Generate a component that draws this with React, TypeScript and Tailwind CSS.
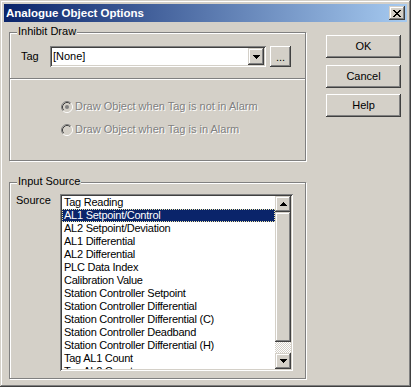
import React from "react";

const items = [
  "Tag Reading",
  "AL1 Setpoint/Control",
  "AL2 Setpoint/Deviation",
  "AL1 Differential",
  "AL2 Differential",
  "PLC Data Index",
  "Calibration Value",
  "Station Controller Setpoint",
  "Station Controller Differential",
  "Station Controller Differential (C)",
  "Station Controller Deadband",
  "Station Controller Differential (H)",
  "Tag AL1 Count",
  "Tag AL2 Count",
];

const winRaised =
  "shadow-[inset_-1px_-1px_#404040,inset_1px_1px_#d4d0c8,inset_-2px_-2px_#808080,inset_2px_2px_#ffffff]";
const btnRaised =
  "shadow-[inset_-1px_-1px_#404040,inset_1px_1px_#ffffff,inset_-2px_-2px_#808080,inset_2px_2px_#d4d0c8]";
const sunken =
  "shadow-[inset_1px_1px_#808080,inset_-1px_-1px_#ffffff,inset_2px_2px_#404040,inset_-2px_-2px_#d4d0c8]";

function Arrow({ up }: { up?: boolean }) {
  const rows = up
    ? [
        [3, 1],
        [2, 3],
        [1, 5],
        [0, 7],
      ]
    : [
        [0, 7],
        [1, 5],
        [2, 3],
        [3, 1],
      ];
  return (
    <svg width="7" height="4" viewBox="0 0 7 4" shapeRendering="crispEdges">
      {rows.map(([x, w], i) => (
        <rect key={i} x={x} y={i} width={w} height={1} fill="#000" />
      ))}
    </svg>
  );
}

function CloseGlyph() {
  const rows: [number, number][][] = [
    [
      [0, 2],
      [6, 2],
    ],
    [
      [1, 2],
      [5, 2],
    ],
    [[2, 4]],
    [[3, 2]],
    [[2, 4]],
    [
      [1, 2],
      [5, 2],
    ],
    [
      [0, 2],
      [6, 2],
    ],
  ];
  return (
    <svg width="8" height="7" viewBox="0 0 8 7" shapeRendering="crispEdges">
      {rows.map((r, y) =>
        r.map(([x, w], j) => <rect key={y + "-" + j} x={x} y={y} width={w} height={1} fill="#000" />)
      )}
    </svg>
  );
}

function Radio({ checked }: { checked?: boolean }) {
  return (
    <svg width="12" height="12" viewBox="0 0 12 12">
      <circle cx="6" cy="6" r="4.5" fill="#d4d0c8" />
      <path d="M2.11 9.89 A5.5 5.5 0 0 1 9.89 2.11" fill="none" stroke="#808080" strokeWidth="1" />
      <path d="M9.89 2.11 A5.5 5.5 0 0 1 2.11 9.89" fill="none" stroke="#ffffff" strokeWidth="1" />
      <path d="M2.82 9.18 A4.5 4.5 0 0 1 9.18 2.82" fill="none" stroke="#404040" strokeWidth="1" />
      <path d="M9.18 2.82 A4.5 4.5 0 0 1 2.82 9.18" fill="none" stroke="#d4d0c8" strokeWidth="1" />
      {checked && <circle cx="6" cy="6" r="2" fill="#808080" />}
    </svg>
  );
}

function GroupBox({
  label,
  className,
  children,
}: {
  label: string;
  className: string;
  children?: React.ReactNode;
}) {
  return (
    <div
      className={
        "relative border border-[#808080] shadow-[1px_1px_0_#ffffff,inset_1px_1px_0_#ffffff] " + className
      }
    >
      <span className="absolute left-[7px] top-[-8px] bg-[#d4d0c8] px-[1px] leading-[13px]">{label}</span>
      {children}
    </div>
  );
}

function PushButton({ label, className }: { label: string; className?: string }) {
  return (
    <div
      className={
        "w-[75px] h-[23px] flex items-center justify-center bg-[#d4d0c8] " + btnRaised + " " + (className || "")
      }
    >
      {label}
    </div>
  );
}

export default function App() {
  return (
    <div
      className={
        "w-[411px] h-[387px] bg-[#d4d0c8] p-[4px] flex flex-col font-['Liberation_Sans',Arial,sans-serif] text-[11px] leading-[13px] text-black " +
        winRaised
      }
    >
      <div className="h-[18px] flex items-center justify-between bg-[linear-gradient(to_right,#0a246a,#a6caf0)] pl-[2px] pr-[2px]">
        <span className="text-white font-bold text-[11.5px]">Analogue Object Options</span>
        <div className={"w-[16px] h-[14px] bg-[#d4d0c8] flex items-center justify-center " + winRaised}>
          <CloseGlyph />
        </div>
      </div>

      <div className="flex pl-[5px] pt-[10px]">
        <div className="w-[297px] flex flex-col">
          <GroupBox label="Inhibit Draw" className="h-[129px] flex flex-col">
            <div className="h-[46px] border-b border-[#808080] shadow-[0_1px_0_#ffffff] flex items-start pt-[13px] pl-[11px]">
              <span className="w-[29px] h-[21px] flex items-center">Tag</span>
              <div className={"w-[216px] h-[21px] bg-white p-[2px] flex " + sunken}>
                <span className="flex-1 pl-[1px] flex items-center">[None]</span>
                <div className={"w-[16px] h-[17px] bg-[#d4d0c8] flex items-center justify-center " + winRaised}>
                  <Arrow />
                </div>
              </div>
              <div className={"ml-[4px] w-[21px] h-[21px] bg-[#d4d0c8] flex items-center justify-center " + btnRaised}>
                <span className="leading-[11px] pt-[2px]">...</span>
              </div>
            </div>
            <div className="flex flex-col pt-[21px] pl-[51px] text-[#808080] [text-shadow:1px_1px_0_#ffffff]">
              <div className="flex items-center h-[13px]">
                <Radio checked />
                <span className="ml-[2px]">Draw Object when Tag is not in Alarm</span>
              </div>
              <div className="flex items-center h-[13px] mt-[10px]">
                <Radio />
                <span className="ml-[2px]">Draw Object when Tag is in Alarm</span>
              </div>
            </div>
          </GroupBox>

          <GroupBox label="Input Source" className="h-[197px] mt-[21px]">
            <div className="flex pt-[11px] pl-[6px]">
              <span className="w-[44px]">Source</span>
              <div className={"w-[233px] h-[177px] bg-white p-[2px] flex " + sunken}>
                <div className="flex-1 overflow-hidden flex flex-col tracking-[-0.25px]">
                  {items.map((it, i) =>
                    i === 1 ? (
                      <div
                        key={i}
                        className="h-[13px] shrink-0 bg-[#0a246a] text-white border border-dotted border-[#f0e8a8] pl-[1px] flex items-center whitespace-nowrap"
                      >
                        {it}
                      </div>
                    ) : (
                      <div key={i} className="h-[13px] shrink-0 pl-[2px] whitespace-nowrap">
                        {it}
                      </div>
                    )
                  )}
                </div>
                <div className="w-[16px] flex flex-col">
                  <div className={"h-[16px] bg-[#d4d0c8] flex items-center justify-center " + winRaised}>
                    <Arrow up />
                  </div>
                  <div className={"h-[130px] bg-[#d4d0c8] " + winRaised} />
                  <div className="h-[11px] bg-[repeating-conic-gradient(#d4d0c8_0_25%,#ffffff_0_50%)] bg-[length:2px_2px]" />
                  <div className={"h-[16px] bg-[#d4d0c8] flex items-center justify-center " + winRaised}>
                    <Arrow />
                  </div>
                </div>
              </div>
            </div>
          </GroupBox>
        </div>

        <div className="ml-[20px] mt-[3px] flex flex-col">
          <PushButton label="OK" />
          <PushButton label="Cancel" className="mt-[7px]" />
          <PushButton label="Help" className="mt-[6px]" />
        </div>
      </div>
    </div>
  );
}
